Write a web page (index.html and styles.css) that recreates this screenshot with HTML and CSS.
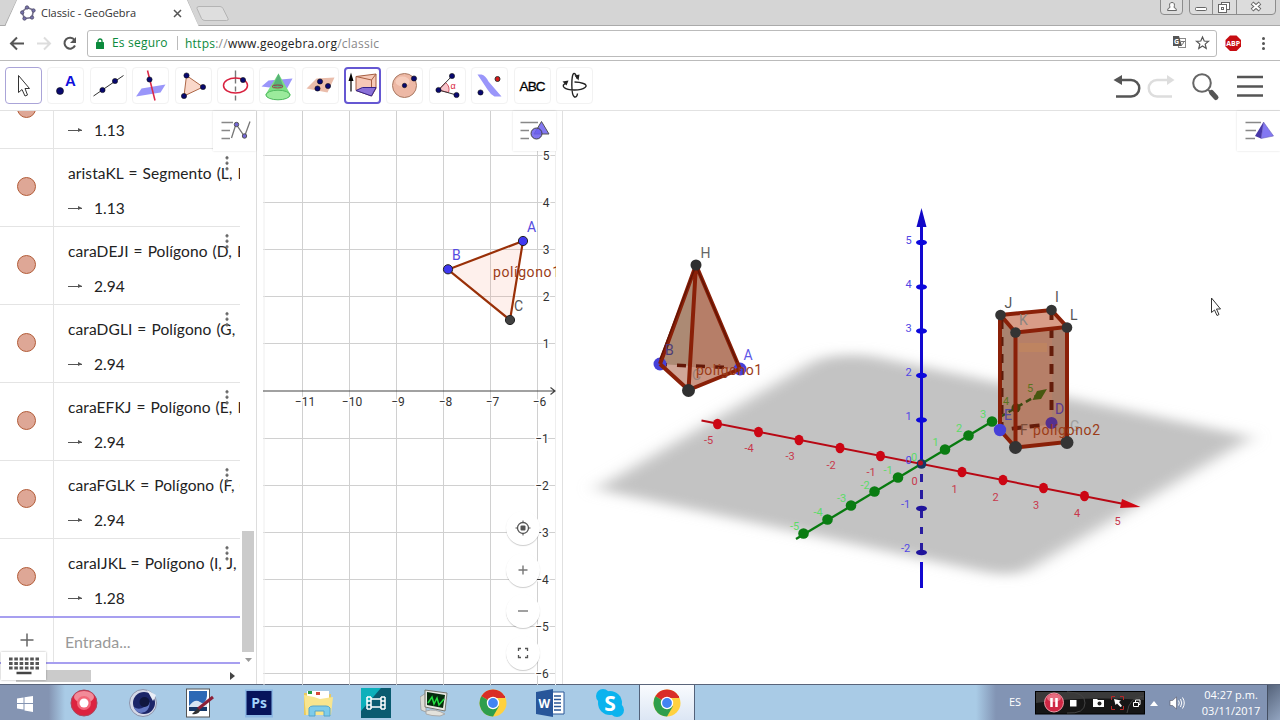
FILE: index.html
```html
<!DOCTYPE html>
<html lang="es">
  <head>
    <meta charset="UTF-8" />
    <title>Classic - GeoGebra</title>
    <link rel="stylesheet" href="styles.css">
  </head>
  <body>
    <!-- browser tabs -->
    <header class="tabstrip">
      <svg class="tab-shape" width="235" height="27" viewBox="0 0 235 27">
        <path d="M0 25.5H5L17 0H187L198 25.5H235" fill="none" stroke="#aaa" />
        <path d="M5 27L17 0H187L199 27Z" fill="#fff" />
        <path d="M197 8.500Q196.500 6.500 199 6.500H220Q222 6.500 223 8.500L228 18.500Q229 20.500 226.500 20.500H205Q202.500 20.500 201.500 18.500Z" fill="#dedede" stroke="#b4b4b4" />
      </svg>
      <div class="tab">
        <svg width="16" height="16" viewBox="0 0 16 16">
          <path d="M7 2.500L13.500 5L12 12.500L4.500 13.500L2 7Z" fill="none" stroke="#77738f" stroke-width="1.600" />
          <g fill="#7773ad" stroke="#4d4966" stroke-width=".8"><circle cx="7" cy="2.500" r="1.700" /><circle cx="13.500" cy="5.500" r="1.700" /><circle cx="12" cy="12.500" r="1.700" /><circle cx="4.500" cy="13.500" r="1.700" /><circle cx="2.200" cy="7.500" r="1.700" /></g>
        </svg>
        <span class="tab-title">Classic - GeoGebra</span>
        <svg width="9" height="9" viewBox="0 0 9 9"><path d="M1 1l7 7M8 1L1 8" stroke="#555" stroke-width="1.500" /></svg>
      </div>
      <svg class="window-buttons" width="122" height="16" viewBox="1158 0 122 16">
        <g fill="#dcdcdc" stroke="#8c8c8c">
          <path d="M1160.500 -2V11Q1160.500 14.500 1164 14.500H1179Q1182.500 14.500 1182.500 11V-2" />
          <path d="M1189.500 -2V11Q1189.500 14.500 1193 14.500H1272Q1275.500 14.500 1275.500 11V-2M1212.500 0V14M1236.500 0V14" />
        </g>
        <g fill="#fff" stroke="#666">
          <path d="M1167.500 10.500Q1167.500 8 1170 7.500Q1168.500 2.500 1172 2.500Q1175.500 2.500 1174 7.500Q1176.500 8 1176.500 10.500Z" />
          <rect x="1195.500" y="7.500" width="11" height="3" rx="1" />
          <rect x="1221.500" y="2.500" width="8" height="7" /><rect x="1218.500" y="4.500" width="8" height="8" /><rect x="1221.500" y="7.500" width="2" height="2" />
        </g>
        <path d="M1252 3l8 7M1260 3l-8 7" stroke="#666" stroke-width="4" /><path d="M1252.500 3.500l7 6M1259.500 3.500l-7 6" stroke="#fff" stroke-width="2" />
      </svg>
    </header>

    <nav class="address-bar">
      <svg class="nav-icons" width="87" height="33" viewBox="0 27 87 33" fill="none">
        <path d="M24 43.500H12M17 37.500L11 43.500L17 49.500" stroke="#555" stroke-width="2" />
        <path d="M37 43.500H49M44 37.500L50 43.500L44 49.500" stroke="#ddd" stroke-width="2" />
        <path d="M74.500 40A5.500 5.500 0 1 0 75 45.500" stroke="#555" stroke-width="2" /><path d="M76 37V43H70Z" fill="#555" />
      </svg>
      <div class="url-box">
        <svg width="8" height="11" viewBox="0 0 8 11"><rect y="4" width="8" height="7" rx=".6" fill="#0b8a3c" /><path d="M2 5V3a2 2 0 0 1 4 0V5" fill="none" stroke="#0b8a3c" stroke-width="1.300" /></svg>
        <span class="secure">Es seguro</span>
        <span class="url"><em>https</em>://<b>www.geogebra.org</b>/classic</span>
        <svg class="url-icons" width="42" height="16" viewBox="1170 36 42 16">
          <rect x="1178.500" y="39.500" width="7" height="9" fill="#fff" stroke="#888" />
          <path d="M1173 37H1179L1182 47H1173Z" fill="#555" />
          <text x="1174" y="44.500" font-size="7" font-weight="bold" fill="#fff">G</text>
          <path d="M1181 42.500H1185M1184 42Q1183 46 1181 46.500" fill="none" stroke="#777" />
          <path d="M1202.500 38l1.700 4 4.300.3-3.300 2.800 1 4.300-3.700-2.400-3.700 2.400 1-4.300-3.300-2.800 4.300-.3z" fill="none" stroke="#555" stroke-width="1.200" />
        </svg>
      </div>
      <svg class="extensions" width="63" height="33" viewBox="1217 27 63 33">
        <path d="M1230 35.500h6.500l4.500 4.500v6.500l-4.500 4.500h-6.500l-4.500-4.500v-6.500z" fill="#c70d12" />
        <text x="1233.200" y="46" text-anchor="middle" font-size="7" font-weight="bold" fill="#fff">ABP</text>
        <g fill="#555"><circle cx="1263.500" cy="38.500" r="1.500" /><circle cx="1263.500" cy="43.500" r="1.500" /><circle cx="1263.500" cy="48.500" r="1.500" /></g>
      </svg>
    </nav>

    <!-- GeoGebra tools -->
    <div class="toolbar">
      <div class="tools">
        <button class="tool active"><svg viewBox="-18.5 -18.5 37 37"><path d="M-5-10V7L-1.500 4 1.500 10.500 4 9.500 1.500 3H6Z" fill="#fff" stroke="#333" /></svg></button>
        <button class="tool"><svg viewBox="-18.5 -18.5 37 37"><circle class="pt" cx="-5.500" cy="5.500" r="3.500" /><text x="-.5" y=".5" font-size="15" font-weight="bold" fill="#1010dc">A</text></svg></button>
        <button class="tool"><svg viewBox="-18.5 -18.5 37 37"><path d="M-15 10.500L15-10" stroke="#333" /><circle class="pt" cx="-6" cy="4.500" r="2.600" /><circle class="pt" cx="6.500" cy="-4.500" r="2.600" /></svg></button>
        <button class="tool"><svg viewBox="-18.5 -18.5 37 37"><path d="M-14.500 11L-9 3 15-1 10 7Z" fill="#9a96fa" /><path d="M-3-15L4.500 15" stroke="#dc2848" stroke-width="1.500" /><circle class="pt" cx="-1" cy="-6" r="2.600" /></svg></button>
        <button class="tool"><svg viewBox="-18.5 -18.5 37 37"><path d="M-7-10L9.500 1.500-9.500 10.500Z" fill="#fad8ca" stroke="#ad6747" /><circle class="pt" cx="-7" cy="-10" r="2.600" /><circle class="pt" cx="9.500" cy="1.500" r="2.600" /><circle class="pt" cx="-9.500" cy="10.500" r="2.600" /></svg></button>
        <button class="tool"><svg viewBox="-18.5 -18.5 37 37"><path d="M0-15V-2M0 1V6M0 10V15" stroke="#777" stroke-width="1.400" /><ellipse rx="12" ry="7.500" fill="none" stroke="#d8203e" stroke-width="1.500" /><circle class="pt" cx="7.500" cy="-5.500" r="2.600" /></svg></button>
        <button class="tool"><svg viewBox="-18.5 -18.5 37 37"><path d="M-16 1L-9-5 15-7 9 4Z" fill="#9a96fa" /><path d="M1-12L-12 9A12.500 5 0 0 0 13 9Z" fill="#7be082" /><ellipse cx=".5" cy="9.500" rx="12" ry="4.800" fill="#9beb9c" stroke="#50b860" /><path d="M1-12L-5 1Q1 3 6 1Z" fill="#58b378" /><ellipse cy="1" rx="5.500" ry="1.500" fill="none" stroke="#9d3445" /></svg></button>
        <button class="tool"><svg viewBox="-18.5 -18.5 37 37"><path d="M-14 3L-4-7 14-8 7 7Z" fill="#eabdab" /><circle class="pt" cx="-.5" cy="-4" r="2.600" /><circle class="pt" cx="-3" cy="3" r="2.600" /><circle class="pt" cx="7.500" cy=".5" r="2.600" /></svg></button>
        <button class="tool selected"><svg viewBox="-18.5 -18.5 37 37"><path d="M-6.500-9L13.500-11.500V3L9 10.500-6.500 5Z" fill="#f6c9b8" stroke="#a65e42" /><path d="M-6.500-9L9-5.500 13.500-11.500M9-5.500V10.500" fill="none" stroke="#a65e42" /><path d="M-6.500 5L0 2H13.500L9 10.500Z" fill="#8a70d8" stroke="#35248a" /><path d="M-11.500 6V-8" stroke="#000" stroke-width="1.200" /><path d="M-11.500-13L-9-4.500H-14Z" /></svg></button>
        <button class="tool"><svg viewBox="-18.5 -18.5 37 37"><circle r="12" fill="#edb8a5" stroke="#a97963" /><ellipse cx="-2" cy="-4" rx="7" ry="5" fill="#f6cdbd" /><circle class="pt" r="2.200" /><circle class="pt" cx="9.500" cy="-7" r="2.600" /></svg></button>
        <button class="tool"><svg viewBox="-18.5 -18.5 37 37"><path d="M-9 4.500L-2-3Q3 1 1 7Z" fill="#f8c5cb" stroke="#d55364" /><path d="M4.500-9.500L-9 4.500 9 9.500" fill="none" stroke="#333" /><text x="3" y="3" font-size="9" fill="#d82440">α</text><circle class="pt" cx="-9" cy="4.500" r="2.600" /><circle class="pt" cx="4.500" cy="-9.500" r="2.600" /><circle class="pt" cx="9" cy="9.500" r="2.600" /></svg></button>
        <button class="tool"><svg viewBox="-18.5 -18.5 37 37"><path d="M-12-11H-8Q-4-10-1-4L12 11H5Q1 9-2 4Z" fill="#9a96fa" /><circle class="pt" cx="-9" cy="7" r="2.600" /><circle cx="8" cy="-6.500" r="2.500" fill="#d81818" stroke="#333" /></svg></button>
        <button class="tool"><svg viewBox="-18.5 -18.5 37 37"><text y="5" text-anchor="middle" font-size="13.500" font-weight="500" stroke="#000" stroke-width=".3" textLength="26">ABC</text></svg></button>
        <button class="tool"><svg viewBox="-18.5 -18.5 37 37" fill="none" stroke="#222" stroke-width="1.400"><path d="M-8-2.500C-15 0-10 4.500 0 4.500S15 0 9-2Q5-3.500 0-3.500M2.500-7Q1.500-12-.5-12C-3.500-12-3.500 10 0 11.500Q2.500 12 3 8" /><path d="M-12-4l6-1-2 5zM0-10l5-1-1 6z" fill="#222" stroke="none" /></svg></button>
      </div>
      <svg class="toolbar-actions" width="160" height="49" viewBox="1110 61 160 49" fill="none">
        <path d="M1119 80H1131A8 8 0 0 1 1131 96.500H1116" stroke="#555" stroke-width="2.500" /><path d="M1113.500 80L1122 75V85Z" fill="#555" />
        <path d="M1168 80H1157A8 8 0 0 0 1157 96.500H1172" stroke="#ddd" stroke-width="2.500" /><path d="M1174.500 80L1167 75V85Z" fill="#ddd" />
        <circle cx="1202" cy="83" r="8.800" stroke="#666" stroke-width="2" /><path d="M1208 90L1211 92" stroke="#666" stroke-width="2" /><path d="M1211.500 92.500L1216 97.500" stroke="#555" stroke-width="5" stroke-linecap="round" />
        <path d="M1237 77H1263M1237 86.500H1263M1237 95.500H1263" stroke="#555" stroke-width="2.500" />
      </svg>
    </div>

    <main class="views">
      <section class="algebra">
        <button class="view-settings"><svg width="43" height="40" viewBox="213 111 43 40" fill="none"><path d="M221.500 122.500H233M221.500 130.500H230M221.500 138.500H230" stroke="#888" stroke-width="1.600" /><path d="M231.500 138L236 124 244.500 136.500 250 121.500" stroke="#777" stroke-width="1.300" /><circle cx="236.500" cy="124.500" r="2.200" fill="#7467d8" stroke="#555" /><circle cx="244.500" cy="136" r="2.200" fill="#7467d8" stroke="#555" /></svg></button>
        <div class="rows">
          <div class="row"><div class="marble"><i></i></div><div class="definition"><p>aristaJK = Segmento (J, K)</p><p class="value"><span class="arrow"></span>1.13</p></div></div>
          <div class="row"><div class="marble"><i></i></div><div class="definition"><p>aristaKL = Segmento (L, K)</p><p class="value"><span class="arrow"></span>1.13</p></div><span class="more"></span></div>
          <div class="row"><div class="marble"><i></i></div><div class="definition"><p>caraDEJI = Polígono (D, E, J, I)</p><p class="value"><span class="arrow"></span>2.94</p></div><span class="more"></span></div>
          <div class="row"><div class="marble"><i></i></div><div class="definition"><p>caraDGLI = Polígono (G, D, I, L)</p><p class="value"><span class="arrow"></span>2.94</p></div><span class="more"></span></div>
          <div class="row"><div class="marble"><i></i></div><div class="definition"><p>caraEFKJ = Polígono (E, F, K, J)</p><p class="value"><span class="arrow"></span>2.94</p></div><span class="more"></span></div>
          <div class="row"><div class="marble"><i></i></div><div class="definition"><p>caraFGLK = Polígono (F, G, L, K)</p><p class="value"><span class="arrow"></span>2.94</p></div><span class="more"></span></div>
          <div class="row"><div class="marble"><i></i></div><div class="definition"><p>caraIJKL = Polígono (I, J, K, L)</p><p class="value"><span class="arrow"></span>1.28</p></div><span class="more"></span></div>
        </div>
        <div class="input-row">
          <div class="marble"><svg width="14" height="14" viewBox="0 0 14 14"><path d="M7 .5V13.500M.5 7H13.500" stroke="#666" stroke-width="1.500" /></svg></div>
          <span class="placeholder">Entrada...</span>
        </div>
        <div class="scroll-x"><i></i><svg width="5" height="8" viewBox="0 0 5 8"><path d="M0 0L5 4 0 8Z" fill="#444" /></svg></div>
        <div class="scroll-y"><i></i><svg width="7" height="4" viewBox="0 0 7 4"><path d="M0 0H7L3.500 4Z" fill="#999" /></svg></div>
        <button class="keyboard"><svg width="32" height="18" viewBox="0 0 32 18"><path d="M1 2H31M1 6.500H31M1 11H31" stroke="#555" stroke-width="3" stroke-dasharray="3.600 1.700" /><path d="M8.500 16H23.500" stroke="#444" stroke-width="2.500" /></svg></button>
      </section>

      <section class="graphics">
        <svg class="plot" width="293" height="574" viewBox="263 111 293 574">
          <path class="grid" d="M302.500 111V685M349.500 111V685M396.500 111V685M443.500 111V685M490.500 111V685M537.500 111V685M263 155.500H556M263 202.500H556M263 249.500H556M263 296.500H556M263 343.500H556M263 438.500H556M263 485.500H556M263 532.500H556M263 579.500H556M263 626.500H556M263 673.500H556" />
          <path class="minor" d="M264 111V685M555.500 111V685" />
          <path d="M263 391H555M550.500 387.500L555 391 550.500 394.500" fill="none" stroke="#444" stroke-width="1.200" />
          <g class="ticks" text-anchor="middle">
            <text x="305" y="406">−11</text><text x="352" y="406">−10</text><text x="398" y="406">−9</text><text x="445.500" y="406">−8</text><text x="492.500" y="406">−7</text><text x="539.500" y="406">−6</text>
            <text x="546" y="160">5</text><text x="546" y="207">4</text><text x="546" y="254">3</text><text x="546" y="301">2</text><text x="546" y="348">1</text>
            <text x="542" y="443">−1</text><text x="542" y="490">−2</text><text x="542" y="537">−3</text><text x="542" y="584">−4</text><text x="542" y="631">−5</text><text x="542" y="678">−6</text>
          </g>
          <path d="M523 241L448 269.500 510 320Z" fill="#f4907022" stroke="#993008" stroke-width="2.200" />
          <g stroke="#222"><circle cx="523" cy="241" r="4.600" fill="#4038f0" /><circle cx="448" cy="269.300" r="4.600" fill="#4038f0" /><circle cx="510" cy="320" r="4.600" fill="#404040" /></g>
          <g class="labels"><text x="527" y="231.500" fill="#554be0">A</text><text x="452" y="259.500" fill="#554be0">B</text><text x="514" y="310.500" fill="#555">C</text><text x="493" y="276.500" fill="#9b3c18" textLength="67">polígono1</text></g>
        </svg>
        <button class="view-settings"><svg width="43" height="40" viewBox="513 111 43 40"><path d="M520.500 122.500H538M520.500 130.500H529M520.500 138.500H529" stroke="#888" stroke-width="1.600" /><path d="M541.500 121.500L549 134H534Z" fill="#8378f2" stroke="#555" /><circle cx="536.500" cy="133.500" r="5.500" fill="#6c60eedd" stroke="#444" /></svg></button>
        <div class="zoom-buttons">
          <button><svg width="16" height="16" viewBox="-8 -8 16 16"><circle r="5.500" fill="none" stroke="#555" stroke-width="1.300" /><rect x="-2.500" y="-2.500" width="5" height="5" rx="1" fill="#555" /><path d="M0-7.500V-5M0 5V7.500M-7.500 0H-5M5 0H7.500" stroke="#555" /></svg></button>
          <button><svg width="16" height="16" viewBox="-8 -8 16 16"><path d="M-4.500 0H4.500M0-4.500V4.500" stroke="#777" stroke-width="1.400" /></svg></button>
          <button><svg width="16" height="16" viewBox="-8 -8 16 16"><path d="M-5 0H5" stroke="#777" stroke-width="1.400" /></svg></button>
          <button><svg width="16" height="16" viewBox="-8 -8 16 16"><path d="M-4.500-2V-4.500H-2M2-4.500H4.500V-2M4.500 2V4.500H2M-2 4.500H-4.500V2" fill="none" stroke="#555" stroke-width="1.300" /></svg></button>
        </div>
      </section>

      <section class="graphics3d">
        <svg class="plot" width="717" height="574" viewBox="563 111 717 574">
          <defs>
            <filter id="soft" x="-10%" y="-10%" width="120%" height="120%"><feGaussianBlur stdDeviation="10 6" /></filter>
          </defs>
          <path d="M596 489L814 361Q834 352 872 356L1252 437 1028 570Q1012 578 980 571Z" fill="#c3c3c3" filter="url(#soft)" />

          <!-- z axis -->
          <g stroke="#1208d0" stroke-width="3">
            <path d="M921.500 222V464M921.500 562V588" />
            <path d="M921.500 474V482M921.500 490V499M921.500 508V518M921.500 527V534M921.500 543V552" stroke="#281ca0" />
          </g>
          <path d="M921.500 208L926.500 227H916.500Z" fill="#1208c8" />
          <g fill="#0c08dc"><ellipse cx="921.500" cy="242.500" rx="5.500" ry="2.800" /><ellipse cx="921.500" cy="287" rx="5.500" ry="2.800" /><ellipse cx="921.500" cy="331" rx="5.500" ry="2.800" /><ellipse cx="921.500" cy="375.500" rx="5.500" ry="2.800" /><ellipse cx="921.500" cy="420" rx="5.500" ry="2.800" /></g>
          <g fill="#20149c"><ellipse cx="921.500" cy="508.500" rx="5.500" ry="2.800" /><ellipse cx="921.500" cy="552.500" rx="5.500" ry="2.800" /></g>
          <!-- x axis -->
          <path d="M701.500 420.500L1124 504" stroke="#b80814" stroke-width="2" />
          <path d="M1122 499L1140.500 507 1120 508Z" fill="#d00814" />
          <g fill="#cc0614"><ellipse cx="717.500" cy="424" rx="4.500" ry="5.300" /><ellipse cx="758.500" cy="432" rx="4.500" ry="5.300" /><ellipse cx="799" cy="440" rx="4.500" ry="5.300" /><ellipse cx="840" cy="448" rx="4.500" ry="5.300" /><ellipse cx="880.500" cy="456" rx="4.500" ry="5.300" /><ellipse cx="962" cy="472" rx="4.500" ry="5.300" /><ellipse cx="1003" cy="480" rx="4.500" ry="5.300" /><ellipse cx="1043.500" cy="488" rx="4.500" ry="5.300" /><ellipse cx="1084.500" cy="496" rx="4.500" ry="5.300" /></g>
          <!-- y axis -->
          <path d="M796 539L992 421.500" stroke="#087a10" stroke-width="2.300" />
          <g fill="#0a7c12"><circle cx="803.500" cy="533.500" r="5.300" /><circle cx="827.500" cy="519.500" r="5.300" /><circle cx="851" cy="505.500" r="5.300" /><circle cx="874.500" cy="491.500" r="5.300" /><circle cx="898" cy="477.500" r="5.300" /><circle cx="945" cy="449.500" r="5.300" /><circle cx="968.500" cy="435.500" r="5.300" /><circle cx="992" cy="421.500" r="5.300" /></g>
          <circle cx="921.500" cy="464" r="4.800" fill="#173864" /><circle cx="920.500" cy="463" r="2.500" fill="#b51020" />

          <g class="axis-labels" text-anchor="middle">
            <g fill="#5148e4"><text x="908.500" y="243.500">5</text><text x="908.500" y="287.500">4</text><text x="908.500" y="332">3</text><text x="908.500" y="376">2</text><text x="908.500" y="419.500">1</text><text x="908.500" y="463.500">0</text><text x="905.500" y="508">-1</text><text x="905.500" y="552">-2</text></g>
            <g fill="#c8384c"><text x="708.500" y="444">-5</text><text x="749" y="452">-4</text><text x="790" y="460">-3</text><text x="831" y="468.500">-2</text><text x="871" y="476">-1</text><text x="914.500" y="484.500">0</text><text x="954.500" y="492.500">1</text><text x="995.500" y="500.500">2</text><text x="1036" y="508.500">3</text><text x="1077" y="516.500">4</text><text x="1117.500" y="524.500">5</text></g>
            <g fill="#5cdc68"><text x="794.500" y="530">-5</text><text x="818" y="516">-4</text><text x="841.500" y="502">-3</text><text x="865" y="489">-2</text><text x="888" y="474">-1</text><text x="914" y="461">0</text><text x="935.500" y="446">1</text><text x="959" y="432">2</text><text x="983" y="418">3</text></g>
          </g>

          <!-- pyramid HABC -->
          <path d="M696 265L660 364 688.500 390Z" fill="#ac8a74" />
          <path d="M660 364L691 366 688.500 390Z" fill="#d0a698" />
          <path d="M696 265L688.500 390 740 369Z" fill="#b67e68" />
          <path d="M691 367L740 369 688.500 390Z" fill="#ca9684" />
          <path d="M660 364.500L740 368" stroke="#641808" stroke-width="3.500" stroke-dasharray="9 10" stroke-dashoffset="2" />
          <circle cx="660" cy="364" r="6.500" fill="#4640d8" /><circle cx="740" cy="369" r="6.500" fill="#4640d8" />
          <path d="M660 364L696 265 740 369M660 364L688.500 390 740 369M696 265L688.500 390" fill="none" stroke="#8a2008" stroke-width="4" stroke-linejoin="round" />
          <path d="M660 359L695 268M697 268L737 362" stroke="#641404" stroke-width="1.500" />
          <circle cx="696" cy="265" r="5.500" fill="#303030" /><circle cx="688.500" cy="390.500" r="6.500" fill="#303030" />
          <g class="labels"><text x="700.500" y="258" fill="#666">H</text><text x="665" y="355" fill="#4b3a78">B</text><text x="743.500" y="360" fill="#6058e8">A</text><text x="692" y="380" fill="#998078">C</text><text x="696" y="375" fill="#9b3c18" textLength="66">polígono1</text></g>

          <!-- prism DEFG-IJKL -->
          <path d="M1000.500 315L1015.500 332.500V447.500L1000 430Z" fill="#a98370" />
          <path d="M1015.500 332.500L1067 327V442L1015.500 447.500Z" fill="#b67f68" />
          <path d="M1052 329L1067 327V442L1052 425Z" fill="#ab806c" />
          <path d="M1019 343H1047V352H1019Z" fill="#be8461" />
          <path d="M1000.500 315L1051.500 310 1067 327 1015.500 332.500Z" fill="#d99c87" />
          <path d="M1015.500 430L1051 424 1067 442 1015.500 447.500Z" fill="#c38b76" />
          <path d="M1000 417L1036 396" stroke="#3a4a10" stroke-width="2.500" stroke-dasharray="6 4" />
          <path d="M1047 389L1041 399 1032.500 400 1037 391Z" fill="#485810" /><circle cx="1016" cy="408" r="4.500" fill="#44420f" />
          <path d="M1051.500 310V424L1000 430" fill="none" stroke="#641c0a" stroke-width="4" stroke-dasharray="10 8" />
          <circle cx="1051.500" cy="423" r="6" fill="#55308f" />
          <g stroke="#8a2008" stroke-width="4" fill="none"><path d="M1000.500 315L1051.500 310 1067 327 1015.500 332.500ZM1015.500 332.500V447.500M1067 327V442L1015.500 447.500 1000 430V315" /></g>
          <path d="M1002.500 320V425" stroke="#5d1b0a" stroke-width="2" stroke-dasharray="9 8" />
          <circle cx="1000" cy="430" r="6.200" fill="#4640d8" />
          <g fill="#343434"><circle cx="1000.500" cy="315" r="5.300" /><circle cx="1051.500" cy="310" r="5.300" /><circle cx="1067" cy="327.500" r="5.300" /><circle cx="1015.500" cy="332.500" r="5.300" /><circle cx="1015.500" cy="447.500" r="6.500" /><circle cx="1067" cy="442.500" r="6.500" /></g>
          <g class="labels"><text x="1004.500" y="308" fill="#555">J</text><text x="1055" y="302" fill="#555">I</text><text x="1070" y="320" fill="#555">L</text><text x="1019" y="325" fill="#8a8480">K</text><text x="1004" y="420" fill="#5548a0">E</text><text x="1055" y="414" fill="#5b3a90">D</text><text x="1020" y="435" fill="#7b4c38">F</text><text x="1070" y="431" fill="#a0a0a0">G</text><text x="1033" y="435" fill="#9b3c18" textLength="67">polígono2</text></g>
          <g class="axis-labels" fill="#5a7420"><text x="1003" y="405">4</text><text x="1027" y="392">5</text></g>

          <path d="M1211.500 298V312.500L1214.500 310 1217 315.500 1219 314.500 1216.500 309H1220.500Z" fill="#fff" stroke="#333" />
        </svg>
        <button class="view-settings"><svg width="43" height="40" viewBox="1237 111 43 40"><path d="M1245.500 122.500H1261M1245.500 130.500H1256M1245.500 138.500H1255" stroke="#888" stroke-width="1.600" /><path d="M1263.500 122L1273.500 136 1261 138.500Z" fill="#8378f2" stroke="#6a62b8" stroke-width=".6" /><path d="M1263.500 122L1255 136 1261 138.500Z" fill="#4838a8" /></svg></button>
      </section>
    </main>

    <footer class="taskbar">
      <div class="start"><svg width="18" height="18" viewBox="0 0 18 18" fill="#fff"><path d="M1 3.500L7.500 2.500V8H1ZM8.500 2.300L17 1V8H8.500ZM1 9H7.500V14.500L1 13.500ZM8.500 9H17V17L8.500 15.500Z" /></svg></div>
      <div class="apps">
        <div class="app"><svg viewBox="-15 -15 30 30"><circle r="13" fill="#dc2340" stroke="#a9485d" /><ellipse cy="-6" rx="10" ry="6" fill="#f28b99" /><circle r="7" fill="#f26678" /><circle r="4.500" fill="#fff" /></svg></div>
        <div class="app"><svg viewBox="-15 -15 30 30"><circle r="13.500" fill="#d4d8e8" stroke="#8c93aa" /><circle cx="1" r="11" fill="#1c2568" /><path d="M-9 4Q-2 9 7-1Q6 10-2 10Q-8 9-9 4Z" fill="#6276c2" /><circle cx="1.500" cy="-1" r="5" fill="#10163e" /><path d="M4-13L13-8 10-2Z" fill="#e9edf6" /></svg></div>
        <div class="app"><svg viewBox="-15 -15 30 30"><rect x="-14.500" y="-14" width="23" height="28" fill="#fff" stroke="#555" /><rect x="-12" y="-12" width="18" height="20" fill="#2d69b5" /><path d="M-12 3Q-6-5-1-1T6-7V8H-12Z" fill="#d7e5f2" /><path d="M-12 4H6V8H-12Z" fill="#163868" /><path d="M12-6L-3 6" stroke="#8c2038" stroke-width="3" /><path d="M-3 5L-9 11Q-4 12-1 8Z" fill="#333" /></svg></div>
        <div class="app"><svg viewBox="-15 -15 30 30"><rect x="-14" y="-13.500" width="28" height="28" fill="#8db8e4" /><rect x="-12.500" y="-12" width="25" height="24" fill="#06145c" /><text y="5" text-anchor="middle" font-size="14" font-weight="bold" fill="#a3d2fa">Ps</text></svg></div>
        <div class="app"><svg viewBox="-15 -15 30 30"><path d="M-14-10H-2L1-7 13-9V12H-14Z" fill="#e8c95f" /><path d="M-11-12H11V-4H-11Z" fill="#fff" /><path d="M-10-12h4v3h-4z" fill="#259b45" /><path d="M-2-11h4v3h-4z" fill="#d84638" /><path d="M-14-8L-4-6 2-4 15-6 13 12H-12Z" fill="#f8e58e" /><path d="M-9 13V5Q-8 3-5 3H8Q11 3 12 5V13H6V8H-3V13Z" fill="#7dcbea" stroke="#56a5cb" /></svg></div>
        <div class="app"><svg viewBox="-15 -15 30 30"><rect x="-15" y="-15" width="30" height="30" fill="#0a5b70" /><path d="M-15-15H5L-15 8Z" fill="#0cb0bb" /><g fill="none" stroke="#fff" stroke-width="1.500"><path d="M-9-6V6M-5-6V6M-9-6H-5M-9-2H-5M-9 2H-5M-9 6H-5M5-6V6M9-6V6M5-6H9M5-2H9M5 2H9M5 6H9M-5-4H5V4H-5" /></g></svg></div>
        <div class="app"><svg viewBox="-15 -15 30 30"><path d="M-15-6L-9-10V9L-14 7Z" fill="#dcdbd4" stroke="#888" stroke-width=".6" /><path d="M-10-13L12-10 10 8-10 4Z" fill="#e9e9e4" stroke="#77776f" /><path d="M-8-11L10-8 8 5-8 2Z" fill="#062c0d" /><path d="M-7 0L-3-6-1 1 2-5 4 2 9-4" fill="none" stroke="#22e03e" stroke-width="1.500" /><path d="M-9 8Q0 5 10 11L5 13Q-4 13-9 11Z" fill="#e3e2dc" stroke="#aaa" /></svg></div>
        <div class="app"><svg viewBox="-15 -15 30 30"><circle r="13.500" fill="#ffd13f" /><path d="M0 0L-11.700-6.700A13.500 13.500 0 0 1 11.700-6.700H0Z" fill="#d92d27" /><path d="M0 0L-11.700-6.700A13.500 13.500 0 0 0 0 13.500L5.800 3.400Z" fill="#2e9e4c" /><path d="M0-6H12" stroke="#d92d27" stroke-width="2" /><circle r="6.200" fill="#fff" /><circle r="4.900" fill="#4284f3" /></svg></div>
        <div class="app"><svg viewBox="-15 -15 30 30"><path d="M-1-11H13V11H-1Z" fill="#fff" stroke="#2b5797" /><path d="M3-7H10M3-3.500H10M3 0H10M3 3.500H10M3 7H10" stroke="#2b5797" stroke-width="1.300" /><path d="M-15-11L2-14V14L-15 11Z" fill="#28569a" /><text x="-6.800" y="4.500" text-anchor="middle" font-size="12" font-weight="bold" fill="#fff">W</text></svg></div>
        <div class="app"><svg viewBox="-15 -15 30 30"><circle r="12" fill="#0bb3ee" /><circle cx="-7" cy="-7" r="7" fill="#0bb3ee" /><circle cx="7" cy="7" r="7" fill="#0bb3ee" /><text y="7.500" text-anchor="middle" font-size="21" font-weight="bold" fill="#fff">S</text></svg></div>
        <div class="app current"><svg viewBox="-15 -15 30 30"><circle r="13.500" fill="#ffd13f" /><path d="M0 0L-11.700-6.700A13.500 13.500 0 0 1 11.700-6.700H0Z" fill="#d92d27" /><path d="M0 0L-11.700-6.700A13.500 13.500 0 0 0 0 13.500L5.800 3.400Z" fill="#2e9e4c" /><path d="M0-6H12" stroke="#d92d27" stroke-width="2" /><circle r="6.200" fill="#fff" /><circle r="4.900" fill="#4284f3" /></svg></div>
      </div>
      <div class="tray">
        <span class="lang">ES</span>
        <svg class="recorder" width="110" height="24" viewBox="0 0 110 24">
          <rect x=".5" y=".5" width="109" height="22.500" fill="#161616" stroke="#000" /><path d="M1 1H109V9Q50 5 1 12Z" fill="#3a3a3a" />
          <path d="M32 1Q50 1 50 12T32 22M92 22Q94 6 109 5" fill="none" stroke="#444" />
          <circle cx="19" cy="11.500" r="9.500" fill="#cf2744" stroke="#ec9aa6" /><ellipse cx="19" cy="7" rx="7" ry="4" fill="#e76d80" /><path d="M16.500 7V16M21.500 7V16" stroke="#fff" stroke-width="2.500" />
          <rect x="35" y="9" width="6.500" height="6.500" fill="#fff" /><path d="M58 8H62L63 9H69V16H58Z" fill="#fff" /><circle cx="64.500" cy="12.500" r="2" fill="#222" />
          <path d="M76.500 9V5.500H80M85 5.500H88.500V9M88.500 15V18.500H85M80 18.500H76.500V15" fill="none" stroke="#b82828" /><path d="M79 8L86 9.500 84 11 87 15 85.500 16 82 12.500 80.500 14Z" fill="#fff" />
          <path d="M98.500 11.500H103.500V15.500H98.500ZM100.500 11V9H105V13.500H104" fill="none" stroke="#fff" />
        </svg>
        <svg class="tray-up" width="8" height="5" viewBox="0 0 8 5"><path d="M0 5L4 0 8 5Z" fill="#fff" /></svg>
        <svg class="volume" width="16" height="14" viewBox="0 0 16 14"><path d="M1 4.500H3.500L7.500 1V13L3.500 9.500H1Z" fill="#fff" stroke="#556" stroke-width=".6" /><path d="M9.500 4.500Q11 7 9.500 9.500M11.500 3Q14 7 11.500 11M13.500 1.500Q17 7 13.500 12.500" fill="none" stroke="#fff" /></svg>
        <div class="clock"><span>04:27 p.m.</span><span>03/11/2017</span></div>
        <div class="show-desktop"></div>
      </div>
    </footer>
  </body>
</html>
```
FILE: styles.css
```css
* {
  box-sizing: border-box;
}
body {
  margin: 0;
  width: 1280px;
  height: 720px;
  overflow: hidden;
  display: flex;
  flex-direction: column;
  background: #fff;
  font-family: "Open Sans", "Noto Sans", sans-serif;
}
svg {
  display: block;
  flex: none;
}
button {
  padding: 0;
  border: 0;
  background: #fff;
}
p {
  margin: 0;
}

/* browser */
.tabstrip {
  position: relative;
  flex: none;
  height: 26px;
  background: #d5d5d5;
  border-bottom: 1px solid #aaa;
}
.tab-shape {
  position: absolute;
  top: 0;
  left: 0;
}
.window-buttons {
  position: absolute;
  top: 0;
  right: 0;
}
.tab {
  position: relative;
  display: flex;
  align-items: center;
  width: 182px;
  height: 26px;
  padding-left: 20px;
}
.tab-title {
  width: 137px;
  padding-left: 5px;
  font-size: 11px;
  letter-spacing: -0.05px;
  line-height: 24px;
  color: #333;
  white-space: nowrap;
}
.address-bar {
  flex: none;
  display: flex;
  align-items: center;
  height: 35px;
  border-bottom: 1px solid #bbb;
}
.url-box {
  display: flex;
  align-items: center;
  width: 1130px;
  height: 27px;
  padding-left: 8px;
  border: 1px solid #bbb;
  border-radius: 3px;
  font-size: 12px;
  white-space: nowrap;
}
.secure {
  width: 74px;
  margin-right: 7px;
  padding-left: 8px;
  border-right: 1px solid #bbb;
  line-height: 14px;
  letter-spacing: 0.2px;
  color: #0b8a3c;
}
.url {
  flex: 1;
  letter-spacing: 0.24px;
  color: #888;
}
.url em {
  font-style: normal;
  color: #0b8a3c;
}
.url b {
  font-weight: normal;
  color: #222;
}
.url-icons {
  margin-right: 4px;
}

/* GeoGebra toolbar */
.toolbar {
  flex: none;
  display: flex;
  justify-content: space-between;
  height: 50px;
  padding: 0 10px 0 5px;
  border-bottom: 1px solid #e2e2e2;
  font-family: Roboto, sans-serif;
}
.tools {
  display: flex;
  gap: 5.38px;
  padding-top: 6px;
}
.tool {
  width: 37px;
  height: 37px;
  border: 1px solid #f2f2f2;
  border-radius: 4px;
}
.tool svg {
  width: 37px;
  height: 37px;
  margin: -1px;
}
.tool.active {
  border-color: #aaa4d8;
}
.tool.selected {
  border: 2px solid #6557d2;
}
.tool.selected svg {
  margin: -2px;
}
.pt {
  fill: #080870;
  stroke: #111;
  stroke-width: 0.6;
}

/* views */
.views {
  flex: 1;
  display: flex;
  min-height: 0;
}
.view-settings {
  position: absolute;
  z-index: 1;
  top: 0;
  right: 0;
  height: 40px;
  box-shadow: 0 0 2px #0002;
}
.algebra {
  position: relative;
  flex: none;
  display: flex;
  flex-direction: column;
  width: 257px;
  border-right: 1px solid #ddd;
  font-family: Lato, sans-serif;
}
.rows {
  display: flex;
  flex-direction: column;
  justify-content: flex-end;
  width: 240px;
  height: 506px;
  overflow: hidden;
}
.row {
  position: relative;
  flex: none;
  display: flex;
  height: 78px;
  border-bottom: 1px solid #e4e4e4;
}
.row:last-child {
  margin-bottom: -1px;
  border-bottom: 0;
}
.marble {
  flex: none;
  display: flex;
  align-items: center;
  justify-content: center;
  width: 54px;
  border-right: 1px solid #e4e4e4;
}
.marble i {
  width: 19px;
  height: 19px;
  margin-top: -3px;
  border: 1px solid #b25c38;
  border-radius: 50%;
  background: #dea796;
}
.definition {
  padding: 7px 0 0 14px;
  font-size: 15.5px;
  line-height: 34px;
  letter-spacing: 0.1px;
  word-spacing: 0.9px;
  color: #222;
  white-space: nowrap;
}
.value {
  display: flex;
  align-items: center;
  line-height: 36px;
  letter-spacing: 0;
}
.arrow {
  position: relative;
  width: 14px;
  height: 1px;
  margin-right: 12px;
  background: #555;
}
.arrow::after {
  content: "";
  position: absolute;
  right: 0;
  top: -2px;
  border: solid transparent;
  border-width: 2.5px 0 2.5px 4px;
  border-left-color: #555;
}
.more {
  position: absolute;
  left: 225px;
  top: 6px;
  width: 4px;
  height: 16px;
  background: radial-gradient(circle, #666 1.2px, transparent 1.9px) 0 0 / 4px 5.5px;
}
.input-row {
  display: flex;
  width: 240px;
  height: 48px;
  border-top: 2px solid #a79ff0;
  border-bottom: 2px solid #a79ff0;
}
.placeholder {
  padding-left: 11px;
  font-size: 16px;
  line-height: 48px;
  color: #999;
}
.scroll-x {
  display: flex;
  align-items: center;
  justify-content: space-between;
  width: 235px;
  height: 20px;
  padding: 3px 0 0 16px;
}
.scroll-x i {
  width: 75px;
  height: 12px;
  background: #cbcbcb;
}
.scroll-y {
  position: absolute;
  left: 242px;
  top: 420px;
  display: flex;
  flex-direction: column;
  align-items: center;
  gap: 6px;
}
.scroll-y i {
  width: 12px;
  height: 121px;
  background: #cbcbcb;
}
.keyboard {
  position: absolute;
  left: 1px;
  top: 541px;
  display: flex;
  align-items: center;
  justify-content: center;
  width: 45px;
  height: 28px;
  box-shadow: 0 0 2px #0005;
}
.graphics {
  position: relative;
  flex: none;
  width: 306px;
  padding-left: 6px;
  border-right: 1px solid #e0e0e0;
  font-family: Roboto, sans-serif;
}
.graphics .view-settings {
  right: 6px;
}
.grid {
  stroke: #d0d0d0;
}
.minor {
  stroke: #eee;
}
.ticks {
  font-size: 12px;
  fill: #333;
  stroke: #fff;
  stroke-width: 3px;
  paint-order: stroke;
}
.labels {
  font-size: 14px;
}
.zoom-buttons {
  position: absolute;
  right: 22px;
  top: 400px;
  display: flex;
  flex-direction: column;
  gap: 7.5px;
}
.zoom-buttons button {
  display: flex;
  align-items: center;
  justify-content: center;
  width: 34px;
  height: 34px;
  border-radius: 50%;
  box-shadow: 0 1px 1px #0003;
}
.graphics3d {
  position: relative;
  flex: 1;
  font-family: Roboto, sans-serif;
}
.axis-labels {
  font-size: 11px;
}

/* windows taskbar */
.taskbar {
  flex: none;
  display: flex;
  height: 36px;
  border-top: 1px solid #59647a;
  background: #a9cbe6;
}
.start {
  display: flex;
  align-items: center;
  width: 65px;
  padding: 3px 0 0 16px;
  background: linear-gradient(90deg, #8494b2 75%, #a9cbe6);
}
.apps {
  flex: none;
  display: flex;
  width: 921px;
  margin-left: -10px;
}
.app {
  display: flex;
  align-items: center;
  justify-content: center;
  width: 58.4px;
  padding-top: 1px;
}
.app svg {
  width: 30px;
  height: 30px;
}
.app.current {
  width: 56px;
  border: 1px solid #53627a;
  border-width: 0 1px;
  background: linear-gradient(#f9fbfe, #dce6f4);
}
.tray {
  flex: 1;
  display: flex;
  align-items: center;
  background: linear-gradient(90deg, #a9cbe6, #8294b4 20px);
  color: #fff;
  font-size: 11px;
}
.lang {
  flex: none;
  width: 59px;
  padding: 0 0 3px 33px;
}
.tray-up {
  margin: 2px 11px 0 5px;
}
.clock {
  flex: none;
  display: flex;
  flex-direction: column;
  align-items: center;
  width: 60px;
  margin-left: 16px;
  line-height: 16px;
  white-space: nowrap;
}
.show-desktop {
  width: 13px;
  height: 35px;
  margin-left: auto;
  border-left: 1px solid #444f62;
  background: linear-gradient(135deg, #55637a, #92a4c0);
}
```
